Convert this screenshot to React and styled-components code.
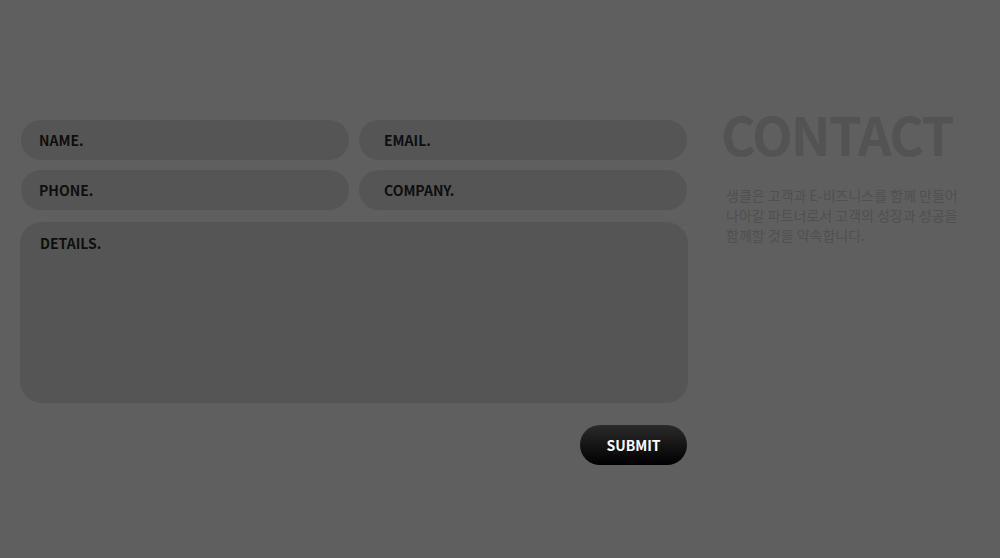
import React from "react";
import styled, { createGlobalStyle } from "styled-components";

const GlobalStyle = createGlobalStyle`
  html, body {
    margin: 0;
    padding: 0;
    background: #5f5f5f;
    font-family: "Noto Sans CJK KR", "Noto Sans", sans-serif;
  }
`;

const Page = styled.div`
  width: 1000px;
  height: 558px;
  box-sizing: border-box;
  padding: 120px 0 0 20px;
  display: flex;
  align-items: flex-start;
  background: #5f5f5f;
`;

const Form = styled.form`
  width: 668px;
  display: flex;
  flex-direction: column;
`;

const Row = styled.div`
  display: grid;
  grid-template-columns: 328px 328px;
  column-gap: 10px;
  padding-left: 1px;
  margin-bottom: 10px;
`;

const Field = styled.div`
  height: 40px;
  border-radius: 20px;
  background: #555555;
  display: flex;
  align-items: center;
  box-sizing: border-box;
  padding-left: ${(p) => p.$pad}px;
  font-size: 14px;
  font-weight: 700;
  color: #0e0e0e;
`;

const Details = styled.div`
  margin-top: 2px;
  height: 181px;
  border-radius: 22px;
  background: #555555;
  box-sizing: border-box;
  padding: 11px 0 0 20px;
  font-size: 14px;
  font-weight: 700;
  color: #0e0e0e;
  line-height: 20px;
`;

const Actions = styled.div`
  display: flex;
  justify-content: flex-end;
  margin-top: 22px;
  padding-right: 1px;
`;

const Submit = styled.button`
  width: 107px;
  height: 40px;
  border: none;
  border-radius: 20px;
  background: linear-gradient(#2a2a2a, #000);
  color: #fff;
  font-family: inherit;
  font-size: 14px;
  font-weight: 700;
  cursor: pointer;
`;

const Side = styled.div`
  margin-left: 35px;
  display: flex;
  flex-direction: column;
`;

const Title = styled.h1`
  margin: -13px 0 0 -2px;
  font-size: 53px;
  font-weight: 700;
  line-height: 53px;
  color: #535353;
  letter-spacing: -1.8px;
`;

const Desc = styled.p`
  margin: 25px 0 0 3px;
  width: 240px;
  font-size: 14px;
  line-height: 20px;
  color: #505050;
`;

export default function App() {
  return (
    <>
      <GlobalStyle />
      <Page>
        <Form onSubmit={(e) => e.preventDefault()}>
          <Row>
            <Field $pad={18}>NAME.</Field>
            <Field $pad={25}>EMAIL.</Field>
          </Row>
          <Row>
            <Field $pad={18}>PHONE.</Field>
            <Field $pad={25}>COMPANY.</Field>
          </Row>
          <Details>DETAILS.</Details>
          <Actions>
            <Submit type="submit">SUBMIT</Submit>
          </Actions>
        </Form>
        <Side>
          <Title>CONTACT</Title>
          <Desc>
            생클은 고객과 E-비즈니스를 함께 만들어
            <br />
            나아갈 파트너로서 고객의 성장과 성공을
            <br />
            함께할 것을 약속합니다.
          </Desc>
        </Side>
      </Page>
    </>
  );
}
